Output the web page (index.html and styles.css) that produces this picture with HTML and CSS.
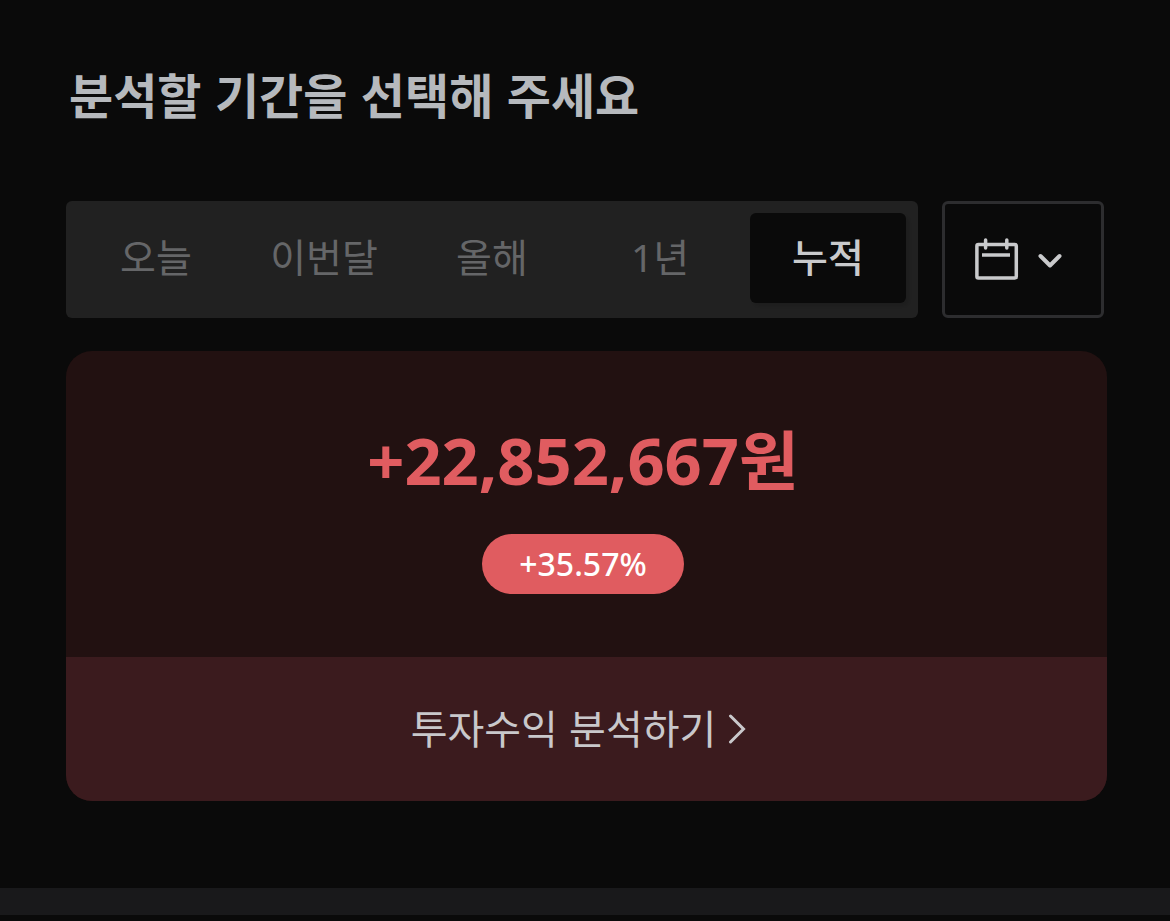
FILE: index.html
```html
<!DOCTYPE html>
<html lang="ko">
<head>
<meta charset="utf-8">
<meta name="viewport" content="width=device-width, initial-scale=1">
<title>투자수익 분석</title>
<link rel="stylesheet" href="styles.css">
</head>
<body>
<main class="page">
  <h1 class="title">분석할 기간을 선택해 주세요</h1>
  <div class="filters">
    <div class="tabs">
      <button class="tab" type="button">오늘</button>
      <button class="tab" type="button">이번달</button>
      <button class="tab" type="button">올해</button>
      <button class="tab" type="button">1년</button>
      <button class="tab tab-active" type="button" aria-pressed="true">누적</button>
    </div>
    <button class="calendar" type="button" aria-label="기간 선택">
      <svg width="44" height="44" viewBox="0 0 44 44" fill="none" stroke="currentColor" stroke-width="3.500">
        <rect x="1.900" y="6.500" width="39.400" height="33.400" rx="1.500"/>
        <path d="M7 17H35"/>
        <path d="M10.600 2V10M31.800 2V10" stroke-linecap="round"/>
      </svg>
      <svg width="24" height="16" viewBox="0 0 24 16" fill="none" stroke="currentColor" stroke-width="4" stroke-linecap="round" stroke-linejoin="round">
        <path d="M2.500 4L12 13.500L21.500 4"/>
      </svg>
    </button>
  </div>
  <section class="card">
    <div class="summary">
      <p class="amount">+22,852,667원</p>
      <span class="rate">+35.57%</span>
    </div>
    <a class="analyze" href="#">
      <span class="analyze-label">투자수익 분석하기</span>
      <svg width="18" height="30" viewBox="0 0 18 30" fill="none" stroke="currentColor" stroke-width="3" stroke-linecap="round">
        <path d="M2.500 2L15.500 15L2.500 28"/>
      </svg>
    </a>
  </section>
</main>
<div class="divider"></div>
</body>
</html>
```
FILE: styles.css
```css
* { box-sizing: border-box; }
body {
  margin: 0;
  background: #0a0a0a;
  color: #c9cacc;
  font-family: "Noto Sans CJK KR", sans-serif;
}
.page { padding: 57px 63px 87px 66px; }
.title {
  margin: 0 0 72px;
  padding-left: 3px;
  font-size: 48px;
  line-height: 72px;
  font-weight: 700;
  color: #b6b9bd;
}
.filters {
  display: flex;
  gap: 24px;
  margin: 0 3px 33px 0;
}
.tabs {
  flex: 1;
  display: grid;
  grid-template-columns: repeat(5, 1fr);
  gap: 12px;
  height: 117px;
  padding: 12px 12px 15px;
  border-radius: 6px;
  background: #212121;
}
.tab {
  padding: 0 0 2px;
  border: 0;
  border-radius: 6px;
  background: none;
  color: #656668;
  font: 400 39px/88px "Noto Sans", "Noto Sans CJK KR", sans-serif;
}
.tab-active {
  background: #0a0a0a;
  color: #c9cacc;
  font-weight: 500;
  box-shadow: 3px 3px 3px rgba(0, 0, 0, 0.1);
}
.calendar {
  display: flex;
  align-items: center;
  justify-content: center;
  gap: 19px;
  width: 162px;
  padding: 0 10px 0 0;
  border: 3px solid #2d2d2f;
  border-radius: 6px;
  background: none;
  color: #c9cacc;
}
.card {
  overflow: hidden;
  border-radius: 26px;
  background: #221111;
}
.summary {
  display: flex;
  flex-direction: column;
  align-items: center;
  padding: 61px 7px 63px 0;
}
.amount {
  margin: 0 0 26px;
  color: #e05c60;
  font: 700 65px/96px "Noto Sans", "Noto Sans CJK KR", sans-serif;
}
.rate {
  padding: 0 37px;
  border-radius: 30px;
  background: #e05c60;
  color: #fff;
  font: 500 32px/60px "Noto Sans", "Noto Sans CJK KR", sans-serif;
}
.analyze {
  display: flex;
  align-items: center;
  justify-content: center;
  gap: 12px;
  height: 144px;
  padding-right: 16px;
  background: #3b1b1e;
  color: #c9c8cb;
  font-size: 40px;
  text-decoration: none;
}
.analyze-label { padding-bottom: 4px; }
.divider { height: 27px; background: #19191b; }
```
